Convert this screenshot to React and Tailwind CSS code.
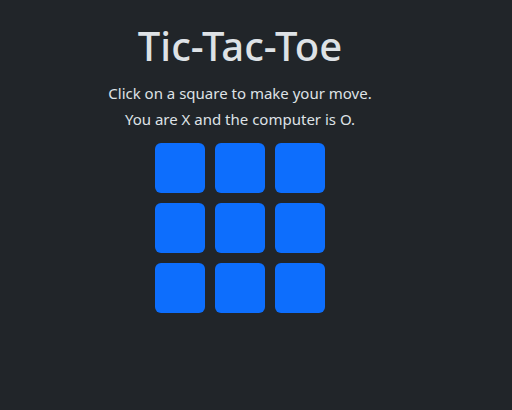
import React, { useState } from "react";

export default function App() {
  const [board, setBoard] = useState(Array(9).fill(null));

  const play = (i) => {
    if (board[i]) return;
    const next = [...board];
    next[i] = "X";
    const free = next.map((v, j) => (v ? null : j)).filter((j) => j !== null);
    if (free.length) next[free[Math.floor(Math.random() * free.length)]] = "O";
    setBoard(next);
  };

  return (
    <div
      className="min-h-[410px] bg-[#212529] text-[#dee2e6]"
      style={{ fontFamily: '"Noto Sans", "Open Sans", sans-serif' }}
    >
      <div className="w-[480px] pt-[22px] flex flex-col items-center text-center">
        <h1 className="text-[40px] font-medium leading-[1.2] mb-[10px]">Tic-Tac-Toe</h1>
        <p className="text-[15px] leading-[26px]">Click on a square to make your move.</p>
        <p className="text-[15px] leading-[26px]">You are X and the computer is O.</p>
        <div className="grid grid-cols-3 gap-[10px] mt-[11px]">
          {board.map((v, i) => (
            <button
              key={i}
              onClick={() => play(i)}
              className="w-[50px] h-[50px] rounded-[6px] bg-[#0d6efd] text-white text-2xl font-bold"
            >
              {v}
            </button>
          ))}
        </div>
      </div>
    </div>
  );
}
